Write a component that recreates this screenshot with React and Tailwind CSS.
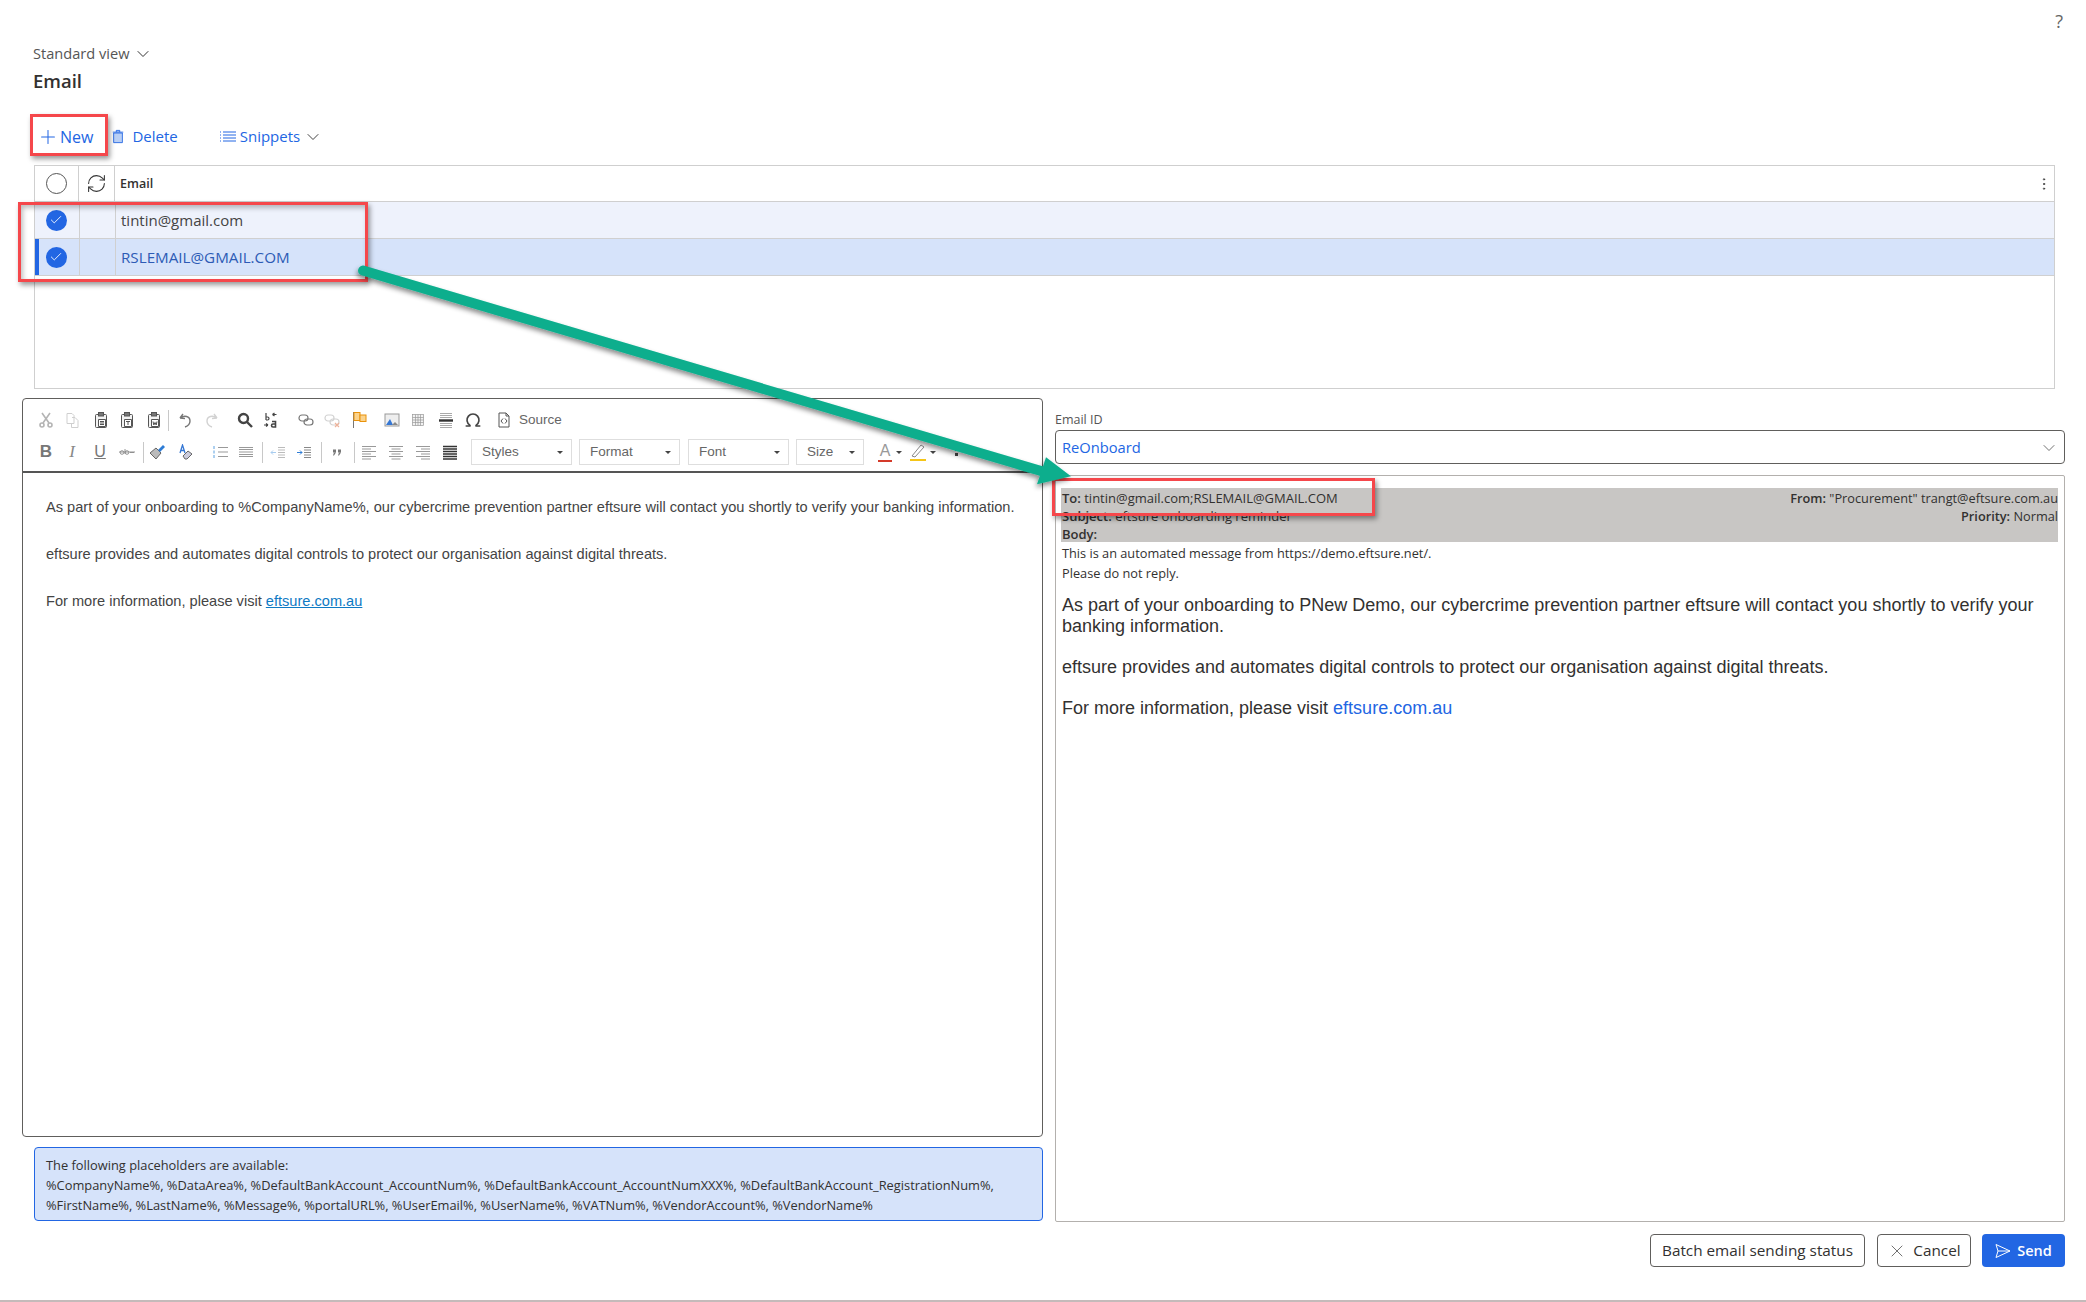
import React from 'react';
import { ChevronDown, Plus, RefreshCw, X, MoreVertical, Check, Omega } from 'lucide-react';

const ARIAL = "font-['Liberation_Sans',Arial,sans-serif]";

// CKEditor style toolbar glyphs, drawn on a 16x16 box
const glyphs = {
  cut: <g fill="none" stroke="#b4b4b4" strokeWidth="1.6"><circle cx="4" cy="13" r="2" /><circle cx="12" cy="13" r="2" /><path d="M5 11 12 1M11 11 4 1" /></g>,
  copy: <g fill="none" stroke="#cfcfcf"><path d="M3 1.5h5l2 2v8H3zM8 5.5h3l3 3v7H7.5v-4" /></g>,
  paste: <g fill="none" stroke="#555"><rect x="2.5" y="2.5" width="11" height="13" rx="1" fill="#f3f3f3" /><rect x="5.5" y=".5" width="5" height="3.5" fill="#777" /><path d="M5.500 7.500h7v7h-7zM7 9.500h4M7 11h4M7 12.500h4" fill="#fff" /></g>,
  pasteText: <g fill="none" stroke="#555"><rect x="2.5" y="2.5" width="11" height="13" rx="1" fill="#f3f3f3" /><rect x="5.5" y=".5" width="5" height="3.5" fill="#777" /><path d="M5.500 7.500h7v7h-7zM7 9.500h4M9 9.500v3.500" fill="#fff" /></g>,
  pasteWord: <g fill="none" stroke="#555"><rect x="2.5" y="2.5" width="11" height="13" rx="1" fill="#f3f3f3" /><rect x="5.5" y=".5" width="5" height="3.5" fill="#777" /><path d="M5.500 7.500h7v7h-7zM7 9.500l.8 3.500L9 10.500l1.200 2.500.8-3.500" fill="#fff" /></g>,
  undo: <path d="M3 6 6 2M3 6l5 .5M3.500 6C7 3 13 4 13 9c0 3-2 5-5 6" fill="none" stroke="#777" strokeWidth="1.4" />,
  redo: <path d="M13 6 10 2M13 6l-5 .5M12.500 6C9 3 3 4 3 9c0 3 2 5 5 6" fill="none" stroke="#d2d2d2" strokeWidth="1.4" />,
  find: <g fill="none" stroke="#444" strokeWidth="2.4"><circle cx="6.5" cy="6.5" r="4.5" /><path d="m10 10 5 5" /></g>,
  replace: <g fill="none" stroke="#444"><path d="M3 1v7M3 5h1.500a1.500 1.500 0 0 1 0 3H3M9.500 2.500h4M9.500 2.500l2-1.500M9.500 2.500l2 1.500M1 13h4M5 13l-2 1.500M5 13l-2-1.500" strokeWidth="1.200" /><path d="M9 9.500h3.500V15H10a1.500 1.500 0 0 1 0-3h2.500" strokeWidth="1.600" /></g>,
  link: <g fill="none" stroke="#777" strokeWidth="1.200"><rect x="1" y="3" width="9" height="6" rx="3" /><rect x="6" y="7" width="9" height="6" rx="3" /></g>,
  unlink: <g fill="none" strokeWidth="1.200"><g stroke="#d2d2d2"><rect x="1" y="3" width="9" height="6" rx="3" /><rect x="6" y="7" width="9" height="6" rx="3" /></g><path d="m11 11 4 4M15 11l-4 4" stroke="#eeb29a" /></g>,
  anchor: <g><path d="M1.500 0v16" stroke="#777" fill="none" /><rect x="2" y=".5" width="6" height="8" fill="#fbd38c" stroke="#e9920b" /><rect x="8" y="3" width="6" height="6.500" fill="#fbd38c" stroke="#e9920b" /></g>,
  image: <g><rect x="1" y="2" width="14" height="12" fill="#eee" stroke="#999" /><path d="m2 13 4-6 3 6z" fill="#3577d4" /><path d="m8 13 3-3 3 3z" fill="#888" /></g>,
  table: <g fill="#f2f2f2" stroke="#999" strokeWidth=".7"><rect x="2.500" y="2.500" width="11" height="11" /><path d="M5.500 2.500v11M8 2.500v11M10.500 2.500v11M2.500 5.500h11M2.500 8h11M2.500 10.500h11" /></g>,
  hr: <g stroke="#aaa"><path d="M2 1.500h12M2 3.500h12M2 5.500h12M2 11.500h12M2 13.500h12M2 15.500h12" /><path d="M1 8.500h14" stroke="#333" strokeWidth="2.400" /></g>,
  source: <g fill="none" stroke="#555"><path d="M3 1h7l3 3v11H3z" /><path d="M10 1v3h3M7 6.500 5 9l2 2.500M9 6.500 11 9l-2 2.500" /></g>,
  strike: <g fill="none" stroke="#888" strokeWidth=".9"><path d="M0 8h16" /><circle cx="3" cy="8.500" r="1.800" /><circle cx="8" cy="8.500" r="1.800" /><path d="M6 5v5M11 8.500h4" /></g>,
  brush: <g><path d="M1 9 7 4l5 5-5 6z" fill="#bbb" stroke="#666" /><path d="m9 6 5-5 2 2-5 5z" fill="#2d7cd6" /></g>,
  remove: <g><path d="M3 9 5.500 1 8 9M4 6.500h3" fill="none" stroke="#3577d4" strokeWidth="1.300" /><path d="m6 12 5-5 4 3-5 5H8z" fill="#ccd" stroke="#666" /></g>,
  numList: <g stroke="#999"><path d="M6 3.500h10M6 8h10M6 12.500h10" /><path d="M2 2v3M2 6.500v3M2 11v3" stroke="#5aa0e0" /></g>,
  bullet: <g stroke="#999"><path d="M1 3.500h14M1 5.500h14M1 8h14M1 10.500h14M1 12.500h14" /></g>,
  outdent: <g stroke="#bbb"><path d="M8 3.500h7M8 6h7M8 8.500h7M8 11h7M8 13.500h7" /><path d="M6 8.500H1M1 8.500l2-2M1 8.500l2 2" stroke="#a8cdf0" fill="none" /></g>,
  indent: <g stroke="#888"><path d="M8 3.500h7M8 6h7M8 8.500h7M8 11h7M8 13.500h7" /><path d="M1 8.500h5M6 8.500l-2-2M6 8.500l-2 2" stroke="#2d7cd6" fill="none" /></g>,
  quote: <g fill="#777"><rect x="4" y="5.500" width="3" height="3" /><rect x="9" y="5.500" width="3" height="3" /><path d="M5 8.500h2l-2 3H4zM10 8.500h2l-2 3H9z" /></g>,
  alignLeft: <g stroke="#999"><path d="M1 2.500h14M1 5h9M1 7.500h14M1 10h9M1 12.500h14M1 15h9" /></g>,
  alignCenter: <g stroke="#999"><path d="M1 2.500h14M3.500 5h9M1 7.500h14M3.500 10h9M1 12.500h14M3.500 15h9" /></g>,
  alignRight: <g stroke="#999"><path d="M1 2.500h14M6 5h9M1 7.500h14M6 10h9M1 12.500h14M6 15h9" /></g>,
  justify: <g stroke="#333" strokeWidth="1.300"><path d="M1 2.500h14M1 5h14M1 7.500h14M1 10h14M1 12.500h14M1 15h14" /></g>,
};

const ToolIcon = ({ name, className = '' }) => (
  <span className={`flex h-[18px] w-[26px] shrink-0 items-center justify-center ${className}`}>
    <svg viewBox="0 0 16 16" className="h-4 w-4">{glyphs[name]}</svg>
  </span>
);

const Separator = ({ className = '' }) => <span className={`h-[21px] w-px shrink-0 bg-[#c8c8c8] ${className}`} />;

const Combo = ({ label, className = '' }) => (
  <div className={`flex h-[26px] shrink-0 items-center justify-between border border-[#dedede] pl-[10px] pr-[8px] text-[13.500px] text-[#666] ${className}`}>
    <span>{label}</span>
    <span className="h-0 w-0 border-x-[3px] border-t-[3px] border-x-transparent border-t-[#444]" />
  </div>
);

const CheckCircle = () => (
  <span className="-ml-[2px] flex h-[21px] w-[21px] items-center justify-center rounded-full bg-[#2266e3]">
    <Check className="h-[14px] w-[14px] text-white" strokeWidth={1.500} />
  </span>
);

const GridRow = ({ selected, email }) => (
  <div className={`relative flex h-[37px] border-b border-[#d0d0d0] ${selected ? 'bg-[#d6e3fa]' : 'bg-[#eef2fc]'}`}>
    {selected && <span className="absolute bottom-0 left-0 top-0 w-[4px] bg-[#2266e3]" />}
    <div className="flex w-[45px] shrink-0 items-center justify-center border-r border-[#d0d0d0]"><CheckCircle /></div>
    <div className="w-[36px] shrink-0 border-r border-[#d0d0d0]" />
    <div className={`flex items-center pl-[5px] ${selected ? 'text-[15.200px] text-[#2d5bb5]' : 'text-[15px] text-[#444]'}`}>{email}</div>
  </div>
);

const Annotations = () => (
  <>
    <div className="absolute left-[30px] top-[114px] h-[42px] w-[78px] border-[3px] border-[#f5474b] shadow-[2px_3px_5px_rgba(0,0,0,0.4)]" />
    <div className="absolute left-[18px] top-[202px] h-[80px] w-[350px] border-[3px] border-[#f5474b] shadow-[2px_3px_5px_rgba(0,0,0,0.4),inset_2px_3px_5px_rgba(0,0,0,0.25)]" />
    <div className="absolute left-[1052px] top-[478px] h-[38px] w-[323px] border-[3px] border-[#f5474b] shadow-[2px_3px_5px_rgba(0,0,0,0.4)]" />
    <svg className="pointer-events-none absolute left-0 top-0 h-full w-full" viewBox="0 0 2086 1302">
      <defs>
        <filter id="arrowShadow" x="-5%" y="-20%" width="110%" height="140%">
          <feDropShadow dx="-1" dy="3" stdDeviation="2.500" floodColor="#000" floodOpacity="0.45" />
        </filter>
      </defs>
      <g filter="url(#arrowShadow)">
        <path d="M362 271 1042 472" stroke="#0aae8d" strokeWidth="10" strokeLinecap="round" fill="none" />
        <path d="M1046 458 1071 477 1037 485z" fill="#0aae8d" />
      </g>
    </svg>
  </>
);

export default function App() {
  return (
    <div className="relative flex h-[1302px] w-[2086px] flex-col overflow-hidden border-b-2 border-[#c4baba] bg-white font-['Open_Sans',sans-serif] text-[#323130]">
      <div className="absolute right-[23px] top-[8px] text-[18px] text-[#666]">?</div>

      <div className="pl-[33px] pt-[43px]">
        <div className="flex h-[20px] items-center gap-[4px] pt-[1px] text-[14.600px] text-[#555]">
          Standard view <ChevronDown className="h-[20px] w-[20px] text-[#333]" strokeWidth={1.200} />
        </div>
        <h1 className="mt-[7px] h-[22px] text-[18.500px] font-semibold leading-[22px]">Email</h1>
        <div className="mt-[31px] flex h-[27px] items-center text-[15px] text-[#2266e3]">
          <Plus className="ml-[4px] h-[22px] w-[22px]" strokeWidth={1.100} />
          <span className="ml-[1px] text-[16px]">New</span>
          <svg viewBox="0 0 16 16" className="ml-[18px] h-[17px] w-[14px]">
            <path d="M3 4h10v11H3zM2 3h12M6 3V1h4v2" fill="#b9cff5" stroke="#2266e3" />
          </svg>
          <span className="ml-[7px]">Delete</span>
          <svg viewBox="0 0 16 16" className="ml-[42px] h-[16px] w-[16px]">
            <path d="M3 3h13M3 6h13M3 9h13M3 12h13M0 3h1M0 6h1M0 9h1M0 12h1" stroke="#2266e3" />
          </svg>
          <span className="ml-[4px]">Snippets</span>
          <ChevronDown className="ml-[3px] h-[20px] w-[20px] text-[#444]" strokeWidth={1.200} />
        </div>
      </div>

      <div className="ml-[34px] mr-[31px] mt-[15px] h-[224px] border border-[#cfcfcf]">
        <div className="flex h-[36px] border-b border-[#cfcfcf]">
          <div className="flex w-[44px] shrink-0 items-center justify-center border-r border-[#cfcfcf]">
            <span className="h-[21px] w-[21px] rounded-full border border-[#555]" />
          </div>
          <div className="flex w-[36px] shrink-0 items-center justify-center border-r border-[#cfcfcf]">
            <RefreshCw className="h-[21px] w-[21px] text-[#333]" strokeWidth={1.200} />
          </div>
          <div className="flex flex-1 items-center justify-between pl-[5px] pr-[2px] pt-[1px] text-[12.500px] font-semibold">
            Email
            <MoreVertical className="h-[16px] w-[16px] text-[#444]" strokeWidth={1.500} />
          </div>
        </div>
        <GridRow email="tintin@gmail.com" />
        <GridRow selected email="RSLEMAIL@GMAIL.COM" />
      </div>

      <div className="mt-[9px] flex">
        <div className="ml-[22px] w-[1021px] shrink-0">
          <div className={`flex h-[739px] flex-col rounded-[4px] border border-[#605e5c] ${ARIAL}`}>
            <div className="h-[74px] shrink-0 border-b-2 border-[#555] text-[13.500px] text-[#666]">
              <div className="flex h-[40px] items-center pl-[10px] pt-[2px]">
                <ToolIcon name="cut" />
                <ToolIcon name="copy" />
                <ToolIcon name="paste" className="ml-[3px]" />
                <ToolIcon name="pasteText" />
                <ToolIcon name="pasteWord" className="ml-[1px]" />
                <Separator className="ml-[1px]" />
                <ToolIcon name="undo" className="ml-[3px]" />
                <ToolIcon name="redo" className="ml-[1px]" />
                <ToolIcon name="find" className="ml-[7px]" />
                <ToolIcon name="replace" />
                <ToolIcon name="link" className="ml-[9px]" />
                <ToolIcon name="unlink" />
                <ToolIcon name="anchor" className="ml-[2px]" />
                <ToolIcon name="image" className="ml-[6px]" />
                <ToolIcon name="table" />
                <ToolIcon name="hr" className="ml-[2px]" />
                <span className="ml-[1px] flex h-[18px] w-[26px] shrink-0 items-center justify-center">
                  <Omega className="h-[18px] w-[18px] text-[#444]" strokeWidth={2.200} />
                </span>
                <ToolIcon name="source" className="ml-[5px]" />
                <span className="ml-[2px]">Source</span>
              </div>
              <div className="flex h-[26px] items-center pl-[10px]">
                <span className="flex w-[26px] shrink-0 justify-center text-[17px] font-bold text-[#777]">B</span>
                <span className="flex w-[26px] shrink-0 justify-center font-['Liberation_Serif',serif] text-[17px] italic text-[#888]">I</span>
                <span className="ml-[2px] flex w-[26px] shrink-0 justify-center text-[16px] text-[#777] underline">U</span>
                <ToolIcon name="strike" className="ml-[1px]" />
                <Separator className="ml-[3px]" />
                <ToolIcon name="brush" />
                <ToolIcon name="remove" className="ml-[2px]" />
                <ToolIcon name="numList" className="ml-[9px]" />
                <ToolIcon name="bullet" />
                <Separator className="ml-[3px]" />
                <ToolIcon name="outdent" className="ml-[2px]" />
                <ToolIcon name="indent" />
                <Separator className="ml-[4px]" />
                <ToolIcon name="quote" className="ml-[2px]" />
                <Separator className="ml-[4px]" />
                <ToolIcon name="alignLeft" className="ml-[1px]" />
                <ToolIcon name="alignCenter" className="ml-[1px]" />
                <ToolIcon name="alignRight" className="ml-[1px]" />
                <ToolIcon name="justify" className="ml-[1px]" />
                <Combo label="Styles" className="ml-[8px] w-[101px]" />
                <Combo label="Format" className="ml-[7px] w-[101px]" />
                <Combo label="Font" className="ml-[8px] w-[101px]" />
                <Combo label="Size" className="ml-[7px] w-[68px]" />
                <span className="ml-[14px] flex h-[20px] w-[14px] flex-col items-center border-b-2 border-[#d43a2a] text-[16px] leading-[18px] text-[#999]">A</span>
                <span className="ml-[4px] h-0 w-0 border-x-[3px] border-t-[3px] border-x-transparent border-t-[#444]" />
                <svg viewBox="0 0 16 18" className="ml-[8px] h-[20px] w-[16px]">
                  <path d="M2 13 11 2l3 2-9 10z" fill="none" stroke="#888" />
                  <path d="M0 17h16" stroke="#f5c518" strokeWidth="2" />
                </svg>
                <span className="ml-[4px] h-0 w-0 border-x-[3px] border-t-[3px] border-x-transparent border-t-[#444]" />
                <span className="ml-[19px] flex flex-col gap-[2px]">
                  <span className="h-[3px] w-[3px] bg-[#444]" />
                  <span className="h-[3px] w-[3px] bg-[#444]" />
                </span>
              </div>
            </div>
            <div className="flex flex-col gap-[30px] pl-[23px] pt-[26px] text-[14.600px] leading-[17px] text-[#444]">
              <p>As part of your onboarding to %CompanyName%, our cybercrime prevention partner eftsure will contact you shortly to verify your banking information.</p>
              <p>eftsure provides and automates digital controls to protect our organisation against digital threats.</p>
              <p>For more information, please visit <span className="text-[#0e7ac4] underline">eftsure.com.au</span></p>
            </div>
          </div>
          <div className="ml-[12px] mt-[10px] h-[74px] rounded-[4px] border border-[#2266e3] bg-[#d6e3fa] pl-[11px] pt-[7px] text-[12.850px] leading-[20px]">
            <p>The following placeholders are available:</p>
            <p>%CompanyName%, %DataArea%, %DefaultBankAccount_AccountNum%, %DefaultBankAccount_AccountNumXXX%, %DefaultBankAccount_RegistrationNum%,</p>
            <p>%FirstName%, %LastName%, %Message%, %portalURL%, %UserEmail%, %UserName%, %VATNum%, %VendorAccount%, %VendorName%</p>
          </div>
        </div>

        <div className="ml-[12px] w-[1010px] shrink-0">
          <div className="mt-[12px] h-[20px] text-[12.500px] leading-[20px] text-[#555]">Email ID</div>
          <div className="flex h-[34px] items-center justify-between rounded-[4px] border border-[#605e5c] pl-[6px] pr-[5px] pt-[1px] text-[14.700px] text-[#2266e3]">
            ReOnboard
            <ChevronDown className="h-[20px] w-[20px] text-[#555]" strokeWidth={1} />
          </div>
          <div className="mt-[11px] h-[747px] rounded-[2px] border border-[#b3b0ad] px-[5px] pt-[12px]">
            <div className="mr-[1px] flex h-[54px] justify-between bg-[#c8c6c4] pl-[1px] pt-[1px] leading-[18px]">
              <div className="text-[13px]">
                <div><b className="font-semibold">To:</b> tintin@gmail.com;RSLEMAIL@GMAIL.COM</div>
                <div><b className="font-semibold">Subject:</b> eftsure onboarding reminder</div>
                <div><b className="font-semibold">Body:</b></div>
              </div>
              <div className="text-right text-[12.750px]">
                <div><b className="font-semibold">From:</b> "Procurement" trangt@eftsure.com.au</div>
                <div><b className="font-semibold">Priority:</b> Normal</div>
              </div>
            </div>
            <div className="mt-[1px] pl-[1px] text-[12.750px] leading-[20px]">
              <div>This is an automated message from https://demo.eftsure.net/.</div>
              <div>Please do not reply.</div>
            </div>
            <div className={`mt-[12px] flex flex-col gap-[20px] pl-[1px] pr-[20px] text-[18px] leading-[21px] ${ARIAL}`}>
              <p>As part of your onboarding to PNew Demo, our cybercrime prevention partner eftsure will contact you shortly to verify your banking information.</p>
              <p>eftsure provides and automates digital controls to protect our organisation against digital threats.</p>
              <p>For more information, please visit <span className="text-[#2266e3]">eftsure.com.au</span></p>
            </div>
          </div>
          <div className="mt-[12px] flex justify-end text-[15.300px]">
            <button className="flex h-[33px] w-[215px] items-center justify-center rounded-[4px] border border-[#605e5c]">Batch email sending status</button>
            <button className="ml-[12px] flex h-[33px] w-[94px] items-center justify-center gap-[6px] rounded-[4px] border border-[#605e5c]">
              <X className="h-[20px] w-[20px] text-[#555]" strokeWidth={1} />
              Cancel
            </button>
            <button className="ml-[11px] flex h-[33px] w-[83px] items-center justify-center gap-[6px] rounded-[4px] bg-[#2266e3] text-[14.500px] font-semibold text-white">
              <svg viewBox="0 0 16 16" className="h-[16px] w-[16px]">
                <path d="M1 1.500 15 8 1 14.500 3 8zM3 8h12" fill="none" stroke="white" />
              </svg>
              Send
            </button>
          </div>
        </div>
      </div>

      <Annotations />
    </div>
  );
}
